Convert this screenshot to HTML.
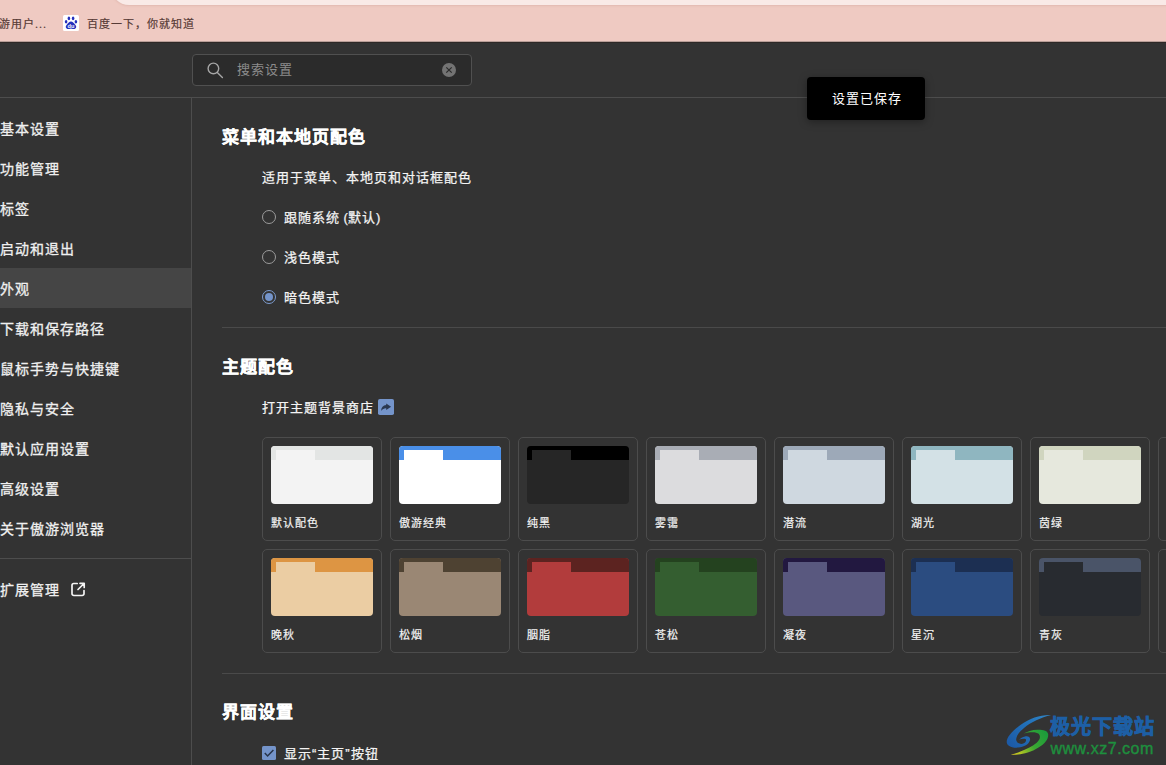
<!DOCTYPE html>
<html lang="zh-CN">
<head>
<meta charset="utf-8">
<title>设置</title>
<style>
*{box-sizing:border-box;margin:0;padding:0}
html,body{width:1166px;height:765px;overflow:hidden;background:#333333}
body{position:relative;font-family:"Liberation Sans",sans-serif;color:#f2f2f2;font-size:14px}
.abs{position:absolute}
/* top browser chrome */
#chrome{left:0;top:0;width:1166px;height:42px;background:#efcac2;overflow:hidden}
#addr{left:110.5px;top:-31.5px;width:1200px;height:36px;border-radius:18px;background:#f9eae7;box-shadow:0 1px 2px rgba(160,100,90,.16)}
.bm{top:16px;height:16px;line-height:16px;font-size:11px;letter-spacing:1px;color:#573b36;-webkit-text-stroke:.2px #573b36;white-space:nowrap}
/* settings header */
#search{left:192px;top:54px;width:280px;height:32px;border:1px solid #505050;border-radius:4px;background:#2b2b2b}
#search .ph{left:44px;top:0;line-height:30px;font-size:13px;letter-spacing:1px;color:#8c8c8c}
#hline{left:0;top:97px;width:1166px;height:1px;background:#4d4d4d}
#vline{left:191px;top:97px;width:1px;height:668px;background:#4d4d4d}
/* sidebar */
.nav{left:0;width:191px;height:40px;line-height:42px;font-size:14px;letter-spacing:1px;color:#f0f0f0;-webkit-text-stroke:.3px #f0f0f0;white-space:nowrap}
.nav.on{background:#454545}
#sline{left:0;top:558px;width:191px;height:1px;background:#4d4d4d}
/* content */
.h{left:222px;height:24px;line-height:24px;font-size:17px;letter-spacing:1px;font-weight:bold;-webkit-text-stroke:.25px #ffffff;color:#ffffff;white-space:nowrap}
.t{height:20px;line-height:22px;font-size:13px;letter-spacing:1px;color:#f4f4f4;-webkit-text-stroke:.25px #f4f4f4;white-space:nowrap}
.div{left:222px;width:944px;height:1px;background:#4a4a4a}
.radio{left:262px;width:14px;height:14px;border:1px solid #9c9c9c;border-radius:50%}
.radio.on{border-color:#7d9ccf}
.radio.on::after{content:"";position:absolute;left:2px;top:2px;width:8px;height:8px;border-radius:50%;background:#7494ca}
/* theme cards */
.card{width:120px;height:104px;border:1px solid #4c4c4c;border-radius:5px}
.pv{position:absolute;left:8px;top:8px;width:102px;height:58px;border-radius:4px;overflow:hidden}
.pv i{position:absolute;left:0;top:0;width:102px;height:14px}
.pv b{position:absolute;left:5px;top:4px;width:39px;height:10px}
.card span{position:absolute;left:8px;top:77px;height:16px;line-height:16px;font-size:11px;letter-spacing:1px;color:#f4f4f4;-webkit-text-stroke:.2px #f4f4f4;white-space:nowrap}
/* toast */
#toast{left:807px;top:77px;width:118px;height:43px;border-radius:4px;background:#000;color:#fff;font-size:13px;letter-spacing:1px;padding-left:1px;line-height:44px;text-align:center;box-shadow:0 2px 8px rgba(0,0,0,.35)}
</style>
</head>
<body>

<!-- browser chrome / bookmarks bar -->
<div id="chrome" class="abs">
  <div id="addr" class="abs"></div>
  <div class="bm abs" style="left:-1px">游用户...</div>
  <svg class="abs" style="left:63px;top:15px" width="16" height="16" viewBox="0 0 16 16">
    <rect width="16" height="16" rx="1.5" fill="#ffffff"/>
    <ellipse cx="3.1" cy="6.7" rx="1.3" ry="1.7" fill="#2531bd"/>
    <ellipse cx="5.9" cy="3.4" rx="1.3" ry="1.8" fill="#2531bd"/>
    <ellipse cx="10.1" cy="3.4" rx="1.3" ry="1.8" fill="#2531bd"/>
    <ellipse cx="12.9" cy="6.7" rx="1.3" ry="1.7" fill="#2531bd"/>
    <path d="M8 6.4c1.8 0 2.8 1.5 3.9 2.8 1.1 1.2 1.7 2.3 1.1 3.6-.6 1.3-2.1 1.5-3.2 1.2-.9-.2-1.3-.4-1.8-.4s-.9.2-1.8.4c-1.1.3-2.6.1-3.2-1.2-.6-1.3 0-2.4 1.1-3.6 1.1-1.3 2.1-2.8 3.9-2.8z" fill="#2531bd"/>
    <text x="8" y="12.9" font-family="Liberation Sans, sans-serif" font-size="5.6" font-weight="bold" fill="#ffffff" text-anchor="middle">du</text>
  </svg>
  <div class="bm abs" style="left:87px">百度一下，你就知道</div>
</div>

<div class="abs" style="left:0;top:41px;width:1166px;height:1px;background:#b89e98"></div>
<div class="abs" style="left:0;top:42px;width:1166px;height:1px;background:#2e2826"></div>

<!-- settings header -->
<div id="search" class="abs">
  <svg class="abs" style="left:12px;top:5px" width="20" height="20" viewBox="0 0 20 20" fill="none" stroke="#a6a6a6" stroke-width="1.4" stroke-linecap="round">
    <circle cx="8.4" cy="8.4" r="5.3"/>
    <path d="M12.3 12.4 17.4 17.5"/>
  </svg>
  <div class="ph abs">搜索设置</div>
  <svg class="abs" style="left:249px;top:8px" width="14" height="14" viewBox="0 0 14 14">
    <circle cx="7" cy="7" r="7" fill="#737373"/>
    <path d="M4.3 4.3 9.7 9.7M9.7 4.3 4.3 9.7" stroke="#2b2b2b" stroke-width="1.2" fill="none"/>
  </svg>
</div>
<div id="hline" class="abs"></div>
<div id="vline" class="abs"></div>

<!-- sidebar -->
<div class="nav abs" style="top:108px">基本设置</div>
<div class="nav abs" style="top:148px">功能管理</div>
<div class="nav abs" style="top:188px">标签</div>
<div class="nav abs" style="top:228px">启动和退出</div>
<div class="nav abs on" style="top:268px">外观</div>
<div class="nav abs" style="top:308px">下载和保存路径</div>
<div class="nav abs" style="top:348px">鼠标手势与快捷键</div>
<div class="nav abs" style="top:388px">隐私与安全</div>
<div class="nav abs" style="top:428px">默认应用设置</div>
<div class="nav abs" style="top:468px">高级设置</div>
<div class="nav abs" style="top:508px">关于傲游浏览器</div>
<div id="sline" class="abs"></div>
<div class="nav abs" style="top:569px">扩展管理</div>
<svg class="abs" style="left:70px;top:581px" width="17" height="17" viewBox="0 0 17 17" fill="none" stroke="#f4f4f4" stroke-width="1.7" stroke-linecap="round" stroke-linejoin="round">
  <path d="M7.2 2.5H3.8a1.8 1.8 0 0 0-1.8 1.8v8.4a1.8 1.8 0 0 0 1.8 1.8h8.4a1.8 1.8 0 0 0 1.8-1.8V9.5"/>
  <path d="M10 2.3h4.2v4.2M14 2.5 8 8.5"/>
</svg>

<!-- section 1 -->
<div class="h abs" style="top:126px">菜单和本地页配色</div>
<div class="t abs" style="left:262px;top:167px">适用于菜单、本地页和对话框配色</div>
<div class="radio abs" style="top:210px"></div>
<div class="t abs" style="left:284px;top:207px">跟随系统<span style="letter-spacing:0"> (</span>默认<span style="letter-spacing:0">)</span></div>
<div class="radio abs" style="top:250px"></div>
<div class="t abs" style="left:284px;top:247px">浅色模式</div>
<div class="radio on abs" style="top:290px"></div>
<div class="t abs" style="left:284px;top:287px">暗色模式</div>
<div class="div abs" style="top:327px"></div>

<!-- section 2 -->
<div class="h abs" style="top:356px">主题配色</div>
<div class="t abs" style="left:262px;top:397px">打开主题背景商店</div>
<svg class="abs" style="left:378px;top:399px" width="16" height="16" viewBox="0 0 16 16">
  <rect width="16" height="16" rx="1.8" fill="#7494ca"/>
  <path d="M8.2 4.4 13.1 7.7 8.2 11V9.3C6.2 9.2 4.6 10 3.1 12 3.2 8.5 5.1 6.4 8.2 6.1z" fill="#2a3850"/>
</svg>

<!--cards-->
<div class="card abs" style="left:262px;top:437px"><div class="pv" style="background:#f3f3f3"><i style="background:#e3e5e4"></i><b style="background:#f3f3f3"></b></div><span>默认配色</span></div>
<div class="card abs" style="left:390px;top:437px"><div class="pv" style="background:#ffffff"><i style="background:#4a8fe8"></i><b style="background:#ffffff"></b></div><span>傲游经典</span></div>
<div class="card abs" style="left:518px;top:437px"><div class="pv" style="background:#262626"><i style="background:#000000"></i><b style="background:#262626"></b></div><span>纯黑</span></div>
<div class="card abs" style="left:646px;top:437px"><div class="pv" style="background:#dcdcde"><i style="background:#a9adb5"></i><b style="background:#dcdcde"></b></div><span>雾霭</span></div>
<div class="card abs" style="left:774px;top:437px"><div class="pv" style="background:#cfd8e0"><i style="background:#9da9b8"></i><b style="background:#cfd8e0"></b></div><span>潜流</span></div>
<div class="card abs" style="left:902px;top:437px"><div class="pv" style="background:#d3e1e6"><i style="background:#8fb6c0"></i><b style="background:#d3e1e6"></b></div><span>湖光</span></div>
<div class="card abs" style="left:1030px;top:437px"><div class="pv" style="background:#e6e8dd"><i style="background:#d0d5bf"></i><b style="background:#e6e8dd"></b></div><span>茵绿</span></div>
<div class="card abs" style="left:1158px;top:437px"></div>
<div class="card abs" style="left:262px;top:549px"><div class="pv" style="background:#ebcda3"><i style="background:#dd9543"></i><b style="background:#ebcda3"></b></div><span>晚秋</span></div>
<div class="card abs" style="left:390px;top:549px"><div class="pv" style="background:#9a8774"><i style="background:#4e4232"></i><b style="background:#9a8774"></b></div><span>松烟</span></div>
<div class="card abs" style="left:518px;top:549px"><div class="pv" style="background:#b23c3c"><i style="background:#5c2320"></i><b style="background:#b23c3c"></b></div><span>胭脂</span></div>
<div class="card abs" style="left:646px;top:549px"><div class="pv" style="background:#345e30"><i style="background:#24421f"></i><b style="background:#345e30"></b></div><span>苍松</span></div>
<div class="card abs" style="left:774px;top:549px"><div class="pv" style="background:#59587f"><i style="background:#221840"></i><b style="background:#59587f"></b></div><span>凝夜</span></div>
<div class="card abs" style="left:902px;top:549px"><div class="pv" style="background:#2b4c80"><i style="background:#1c2f52"></i><b style="background:#2b4c80"></b></div><span>星沉</span></div>
<div class="card abs" style="left:1030px;top:549px"><div class="pv" style="background:#282b30"><i style="background:#4a5468"></i><b style="background:#282b30"></b></div><span>青灰</span></div>
<div class="card abs" style="left:1158px;top:549px"></div>
<!--/cards-->

<div class="div abs" style="top:673px"></div>

<!-- section 3 -->
<div class="h abs" style="top:701px">界面设置</div>
<svg class="abs" style="left:262px;top:746px" width="14" height="14" viewBox="0 0 14 14">
  <rect width="14" height="14" rx="1.5" fill="#7494ca"/>
  <path d="M2.8 7 5.6 10 11.4 3.9" fill="none" stroke="#27344a" stroke-width="1.5"/>
</svg>
<div class="t abs" style="left:284px;top:743px">显示“主页”按钮</div>

<!-- watermark -->
<svg class="abs" style="left:1000px;top:708px" width="60" height="52" viewBox="1000 708 60 52">
  <defs>
    <linearGradient id="gb" x1="1050" y1="714" x2="1010" y2="748" gradientUnits="userSpaceOnUse">
      <stop offset="0" stop-color="#3187c8"/><stop offset=".45" stop-color="#2271b9"/><stop offset="1" stop-color="#1c59a6"/>
    </linearGradient>
    <linearGradient id="gg" x1="1046" y1="731" x2="1011" y2="755" gradientUnits="userSpaceOnUse">
      <stop offset="0" stop-color="#1a9a3c"/><stop offset=".45" stop-color="#3aa832"/><stop offset=".75" stop-color="#a4c024"/><stop offset="1" stop-color="#e0cc20"/>
    </linearGradient>
  </defs>
  <path fill="url(#gb)" d="M1051 715C1041 714.5 1030 718 1020.4 725C1012 731 1006 738 1006.8 742.7C1007.5 746.5 1013 748 1018 747.6C1024 747 1029 744.5 1030 740C1030.6 737 1028 735.6 1025 736.4C1022.5 737 1020.5 738.2 1019 739.5C1021 738.8 1023.5 738.4 1025 738.8C1027 739.5 1026 742 1023.8 743.3C1021 744.8 1017 743.5 1016.3 740.6C1015.5 737 1019 732 1024 728C1031 722 1041 717.5 1051 715Z"/>
  <path fill="url(#gg)" d="M1023.8 733.5C1027 731.5 1032 729.8 1037.4 729.7C1043 729.6 1048 730.5 1048.2 734.5C1048.4 739 1045 743 1040.8 746C1035 750.5 1026 753.5 1020.4 754.2C1016 754.8 1013 754.8 1010.9 754.5C1014 754 1017 753 1020.4 751.5C1026 749.5 1032 746.5 1036.7 742.7C1040 739.5 1041 736.5 1038.7 733.8C1036.5 731.5 1029 731.8 1023.8 733.5Z"/>
</svg>
<div class="abs" style="left:1050px;top:713px;height:28px;line-height:28px;font-size:20px;letter-spacing:1px;font-weight:bold;-webkit-text-stroke:.8px #1d5fa5;color:#1d5fa5;white-space:nowrap">极光下载站</div>
<div class="abs" style="left:1050.5px;top:739px;height:20px;line-height:20px;font-size:16px;letter-spacing:.5px;color:#1e8f3e;-webkit-text-stroke:.4px #1e8f3e;white-space:nowrap">www.xz7.com</div>

<!-- toast -->
<div id="toast" class="abs">设置已保存</div>

</body>
</html>
